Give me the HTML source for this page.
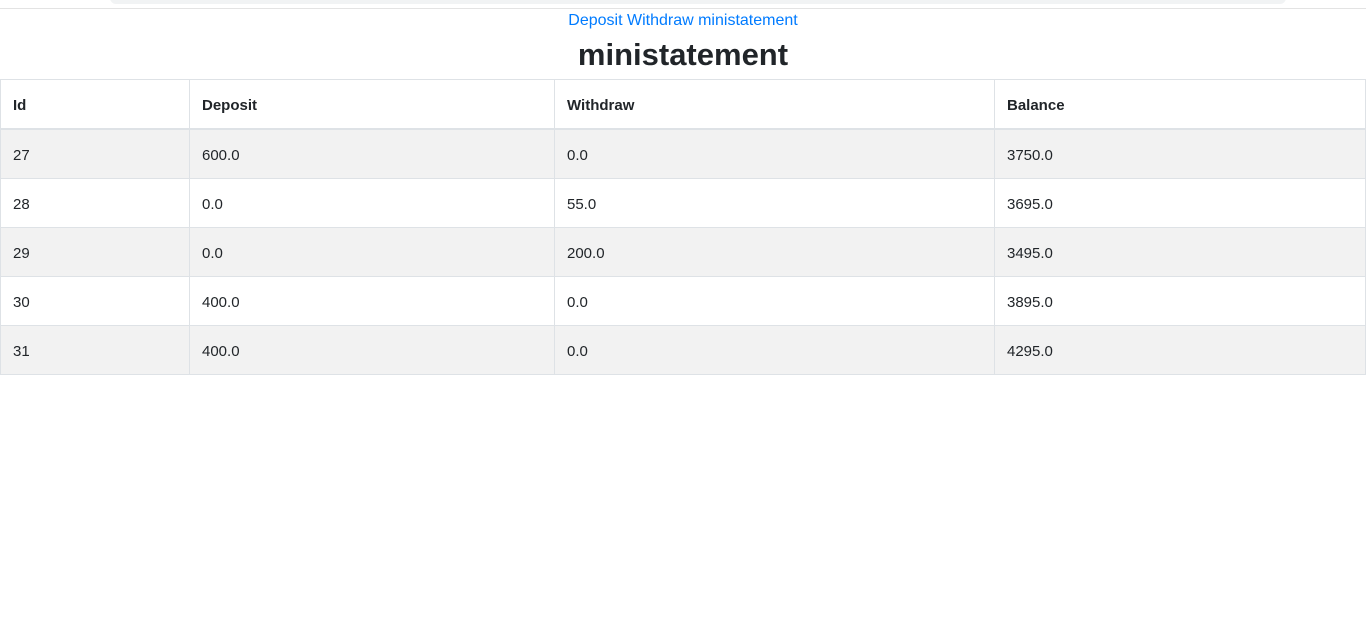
<!DOCTYPE html>
<html><head><style>
body{margin:0;width:1368px;height:620px;background:#fff;font-family:"Liberation Sans",sans-serif;color:#212529;position:relative;overflow:hidden}
.bar{position:absolute;left:110px;top:-8px;width:1176px;height:12px;background:#f1f3f4;border-radius:6px}
.line{position:absolute;left:0;top:8px;width:1366px;height:1px;background:#e3e3e3}
.nav{position:absolute;top:12px;left:0;width:1366px;text-align:center;font-size:16px;color:#007bff}
h2{position:absolute;top:37px;left:0;width:1366px;margin:0;text-align:center;font-size:31px;font-weight:bold;line-height:36px}
table{position:absolute;top:79px;left:0;border-collapse:collapse;width:1366px;font-size:15px}
td,th{border:1px solid #dee2e6;padding:3px 12px 0;height:45px;text-align:left}
th{border-bottom:2px solid #dee2e6;height:45px}
tr.s td{background:#f2f2f2}
</style></head><body>
<div class="bar"></div><div class="line"></div>
<div class="nav">Deposit Withdraw ministatement</div>
<h2>ministatement</h2>
<table>
<tr><th style="width:164px">Id</th><th style="width:340px">Deposit</th><th style="width:415px">Withdraw</th><th>Balance</th></tr>
<tr class="s"><td>27</td><td>600.0</td><td>0.0</td><td>3750.0</td></tr>
<tr><td>28</td><td>0.0</td><td>55.0</td><td>3695.0</td></tr>
<tr class="s"><td>29</td><td>0.0</td><td>200.0</td><td>3495.0</td></tr>
<tr><td>30</td><td>400.0</td><td>0.0</td><td>3895.0</td></tr>
<tr class="s"><td>31</td><td>400.0</td><td>0.0</td><td>4295.0</td></tr>
</table>
</body></html>
